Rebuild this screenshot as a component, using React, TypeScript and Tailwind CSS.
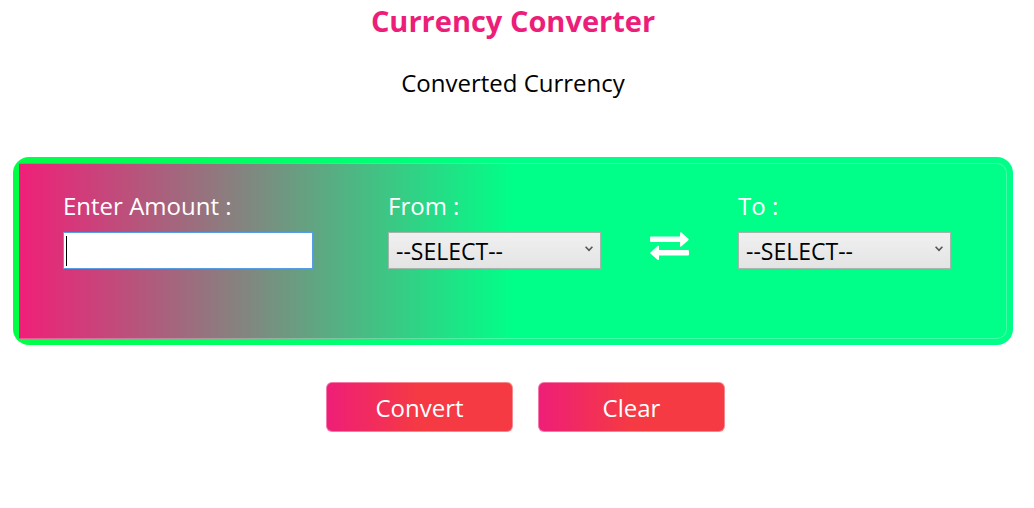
import { useState } from "react";

const currencies = ["USD", "EUR", "GBP", "INR", "JPY"];

function CurrencySelect({ id, label }: { id: string; label: string }) {
  return (
    <div className="w-[213px] shrink-0">
      <label htmlFor={id} className="block h-[42px] leading-[32px]">
        {label}
      </label>
      <div className="relative">
        <select
          id={id}
          defaultValue=""
          className="block h-[37px] w-full appearance-none rounded-none border border-[#a5b5ac] bg-linear-to-b/srgb from-[#f0f0f0] to-[#e4e4e4] pl-[7px] text-[23px] leading-[32px] text-black outline-none"
        >
          <option value="">--SELECT--</option>
          {currencies.map((code) => (
            <option key={code}>{code}</option>
          ))}
        </select>
        <svg
          aria-hidden="true"
          viewBox="0 0 8 6"
          className="pointer-events-none absolute top-[14px] right-2 h-1.5 w-2"
          fill="none"
          stroke="#555"
          strokeWidth="1.6"
        >
          <path d="M.6.8 4 4.4 7.4.8" />
        </svg>
      </div>
    </div>
  );
}

function ActionButton({ children, onClick }: { children: string; onClick?: () => void }) {
  return (
    <button
      type="button"
      onClick={onClick}
      className="h-[50px] w-[187px] rounded-md border border-white/40 bg-linear-to-r/srgb from-[#ee1e78] to-[#f53a43] to-50% bg-origin-border pt-0.5 text-center text-white"
    >
      {children}
    </button>
  );
}

export default function App() {
  const [amount, setAmount] = useState("");

  return (
    <main className="bg-white pr-[21px] pb-10 pl-[13px] font-['Open_Sans','Noto_Sans',sans-serif] text-[24px] leading-[32px] text-black">
      <h1 className="text-center text-[29px] leading-[42px] font-bold text-[#ec1e79]">Currency Converter</h1>
      <p className="mt-[25px] text-center">Converted Currency</p>

      <section className="mt-[58px] rounded-2xl bg-linear-to-r/srgb from-[#00ff44] to-[#00ff88] to-50% p-1.5">
        <div className="flex h-[176px] rounded-r-[10px] border-y border-r border-white/25 bg-linear-to-r/srgb from-[#f01f78] to-[#00ff88] to-50% bg-origin-border pt-[26px] pl-[44px] text-white">
          <div className="w-[250px] shrink-0">
            <label htmlFor="amount" className="block h-[42px] leading-[32px]">
              Enter Amount :
            </label>
            <div className="relative">
              <input
                id="amount"
                type="text"
                value={amount}
                onChange={(event) => setAmount(event.target.value)}
                className="peer block h-[37px] w-full border border-[#569de5] bg-white px-1 text-[23px] text-black outline-none"
              />
              <span
                aria-hidden="true"
                className="pointer-events-none absolute top-1 left-[3px] h-[30px] w-px bg-black peer-focus:hidden"
              />
            </div>
          </div>
          <div className="ml-[75px]">
            <CurrencySelect id="from" label="From :" />
          </div>
          <svg
            aria-hidden="true"
            viewBox="0 0 39 28"
            className="mt-[42px] ml-[49px] h-7 w-[39px] shrink-0"
            fill="currentColor"
          >
            <path d="M1 4.500h29V1q0-1 1.200-.8L38.600 7q.4.5 0 1L31.200 14.400Q30 15 30 14v-4H1Q0 10 0 9V5.500Q0 4.500 1 4.500Z" />
            <path d="M38 18H9v-3.500q0-1-1.200-.8L.4 20.500q-.4.5 0 1l7.400 6.400Q9 28.500 9 27.500V23.500h29q1 0 1-1V19q0-1-1-1Z" />
          </svg>
          <div className="ml-[49px]">
            <CurrencySelect id="to" label="To :" />
          </div>
        </div>
      </section>

      <div className="mt-[37px] ml-[25px] flex justify-center gap-[25px]">
        <ActionButton>Convert</ActionButton>
        <ActionButton onClick={() => setAmount("")}>Clear</ActionButton>
      </div>
    </main>
  );
}
